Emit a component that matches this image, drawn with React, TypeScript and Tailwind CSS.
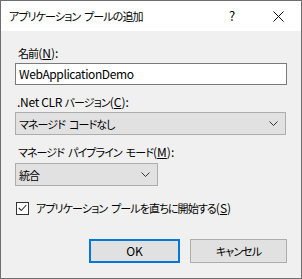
const font = {
  fontFamily: '"Noto Sans CJK JP", "Noto Sans", sans-serif',
};

// Japanese runs: Yu Gothic UI is narrower than Noto, so tighten them
// and keep the word gaps visible
function J({text}: {text: string}) {
  const parts = text.split(' ');
  return (
    <span className="text-[11px] tracking-[-0.9px]">
      {parts.map((p, i) => (
        <span key={i}>
          {i > 0 && <span className="inline-block w-[4px]" />}
          {p}
        </span>
      ))}
    </span>
  );
}

function Chevron() {
  return (
    <svg width="9" height="6" viewBox="0 0 9 6" className="text-[#333]">
      <path d="M0.5 0.5 L4.5 4.5 L8.5 0.5" fill="none" stroke="currentColor" strokeWidth="1" />
    </svg>
  );
}

function Select({value, width}: {value: string; width: string}) {
  return (
    <div className={`${width} h-[23px] flex items-center justify-between border border-[#adadad] bg-[#e1e1e1] pl-[3px] pr-[7px]`}>
      <span className="leading-[16px]"><J text={value} /></span>
      <Chevron />
    </div>
  );
}

export default function App() {
  return (
    <div
      className="w-[302px] h-[279px] flex flex-col border border-[#6e6e6e] bg-[#f0f0f0] text-[12px] text-black [font-feature-settings:'palt']"
      style={font}>
      {/* title bar */}
      <div className="h-[30px] flex items-center bg-white">
        <span className="pl-[8px] leading-[16px] flex-1"><J text="アプリケーション プールの追加" /></span>
        <div className="w-[46px] h-full flex items-center justify-center text-[13px]">?</div>
        <div className="w-[46px] h-full flex items-center justify-center">
          <svg width="11" height="11" viewBox="0 0 11 11">
            <path d="M0.5 0.5 L10.5 10.5 M10.5 0.5 L0.5 10.5" stroke="#111" strokeWidth="1" />
          </svg>
        </div>
      </div>

      {/* body */}
      <div className="flex flex-col px-[14px]">
        <div className="mt-[14px] h-[16px] leading-[16px] pl-[3px]">
          <J text="名前" />(<span className="underline">N</span>):
        </div>
        <div className="mt-[2px] h-[22px] flex items-center border border-[#7a7a7a] bg-white pl-[3px]">
          <span className="leading-[16px] tracking-[-0.4px]">WebApplicationDemo</span>
        </div>

        <div className="mt-[9px] h-[16px] leading-[16px] pl-[2px]">
          <span className="tracking-[-0.3px]">.Net CLR </span><J text="バージョン" />(<span className="underline">C</span>):
        </div>
        <div className="mt-[2px]">
          <Select value="マネージド コードなし" width="w-[271px]" />
        </div>

        <div className="mt-[9px] h-[16px] leading-[16px] pl-[3px]">
          <J text="マネージド パイプライン モード" />(<span className="underline">M</span>):
        </div>
        <div className="mt-[3px]">
          <Select value="統合" width="w-[143px]" />
        </div>

        <div className="mt-[14px] h-[16px] flex items-center gap-[7px] pl-[1px]">
          <div className="w-[13px] h-[13px] border border-[#333] bg-white flex items-center justify-center">
            <svg width="9" height="8" viewBox="0 0 9 8">
              <path d="M0.8 4 L3.3 6.5 L8.3 1" fill="none" stroke="#333" strokeWidth="1.1" />
            </svg>
          </div>
          <span className="leading-[16px]">
            <J text="アプリケーション プールを直ちに開始する" />(<span className="underline">S</span>)
          </span>
        </div>

        <div className="mt-[23px] flex justify-end gap-[10px]">
          <div className="w-[91px] h-[24px] flex items-center justify-center border-2 border-[#0078d7] bg-[#e1e1e1]">
            OK
          </div>
          <div className="w-[97px] h-[24px] flex items-center justify-center border border-[#adadad] bg-[#e1e1e1]">
            <J text="キャンセル" />
          </div>
        </div>
      </div>
    </div>
  );
}
